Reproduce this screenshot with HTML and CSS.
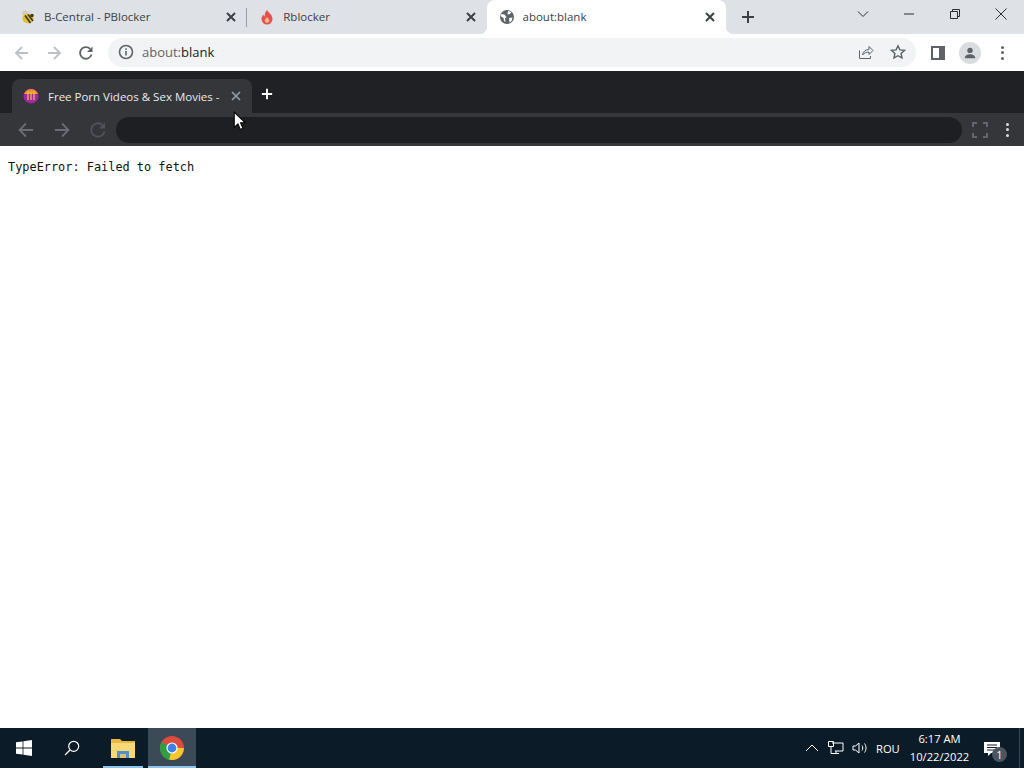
FILE: index.html
```html
<!DOCTYPE html>
<html lang="en">
<head>
    <meta charset="UTF-8">
    <title>about:blank</title>
    <link rel="stylesheet" href="styles.css">
</head>
<body>

<div class="screen">
    <header class="browser">
        <div class="tabstrip">
            <div class="tab">
                <svg class="favicon" viewBox="0 0 16 16">
                    <ellipse cx="5" cy="4" rx="3" ry="2.600" fill="#cfcdbd"/>
                    <ellipse cx="10.500" cy="3" rx="2.200" ry="2" fill="#dedccf"/>
                    <ellipse cx="8" cy="9.500" rx="5.600" ry="4.800" fill="#e0c030"/>
                    <path d="M5 6.500l5.500 7.500M8 5.500l5 6.500" stroke="#3a3822" stroke-width="1.600"/>
                    <circle cx="12" cy="6.500" r="1.700" fill="#3a3822"/>
                </svg>
                <span class="tab-title">B-Central - PBlocker</span>
                <svg class="tab-close" viewBox="0 0 12 12"><path d="M2 2l8 8M10 2l-8 8"/></svg>
            </div>
            <span class="tab-sep"></span>
            <div class="tab">
                <svg class="favicon" viewBox="0 0 16 16">
                    <path d="M8 1c1 2.500 5.500 4.500 5.500 9A5.500 5.500 0 0 1 2.500 10c0-2 1-3.500 2-4.500 0 1 .5 1.800 1.200 2C5.500 5 6.500 2.500 8 1z" fill="#e8504f"/>
                    <path d="M8 8c.6 1.200 2.300 2 2.300 3.500a2.300 2.300 0 0 1-4.600 0C5.700 10 7.400 9.200 8 8z" fill="#f9b98e"/>
                </svg>
                <span class="tab-title">Rblocker</span>
                <svg class="tab-close" viewBox="0 0 12 12"><path d="M2 2l8 8M10 2l-8 8"/></svg>
            </div>
            <div class="tab active">
                <svg class="favicon" viewBox="0 0 16 16">
                    <circle cx="8" cy="8" r="7" fill="#5f6368"/>
                    <path d="M2.500 5l3 .5 2 2.500-1.500 1.500.5 3.500-1.500-1-.5-3-3-2zM9 2l3.500 1-1.500 2-2.500.5zM10 9l3.500-.5-1 3.500-2 1.500z" fill="#fff"/>
                </svg>
                <span class="tab-title">about:blank</span>
                <svg class="tab-close" viewBox="0 0 12 12"><path d="M2 2l8 8M10 2l-8 8"/></svg>
            </div>
            <svg class="new-tab" viewBox="0 0 14 14"><path d="M7 1v12M1 7h12"/></svg>
            <div class="window-btns">
                <span class="win-btn"><svg viewBox="0 0 12 12"><path d="M1 3.500l5 5 5-5"/></svg></span>
                <span class="win-btn"><svg viewBox="0 0 12 12"><path d="M1 6h10"/></svg></span>
                <span class="win-btn"><svg viewBox="0 0 12 12"><path d="M1.500 3.500h7v7h-7zM3.500 3.500v-2h7v7h-2"/></svg></span>
                <span class="win-btn"><svg viewBox="0 0 12 12"><path d="M.5.500l11 11M11.500.500l-11 11"/></svg></span>
            </div>
        </div>

        <div class="toolbar">
            <svg class="nav-icon off" viewBox="0 0 16 16"><path d="M14 8H2.500M8 2L2 8l6 6"/></svg>
            <svg class="nav-icon off" viewBox="0 0 16 16"><path d="M2 8h11.500M8 2l6 6-6 6"/></svg>
            <svg class="nav-icon on" viewBox="0 0 16 16"><path d="M13.500 9.500A5.800 5.800 0 1 1 12 3.800"/><path class="fill" d="M14.500 1.500v5.500H9z"/></svg>
            <div class="omnibox">
                <svg class="info-icon" viewBox="0 0 16 16"><circle cx="8" cy="8" r="6.500"/><path d="M8 7v4.500M8 4.300v1.500"/></svg>
                <span class="url"><span class="scheme">about:</span>blank</span>
                <svg class="omni-icon share" viewBox="0 0 16 16"><path d="M1.500 6.500v8h11v-2.500"/><path d="M4.500 11c.5-3.500 3-5.500 6.500-5.500V2.500l4 4-4 4V8c-2.500 0-5 1-6.500 3z"/></svg>
                <svg class="omni-icon" viewBox="0 0 16 16"><path d="M8 1.800l1.900 4.100 4.500.5-3.300 3 .9 4.500L8 11.700l-4 2.200.9-4.500-3.300-3 4.500-.5z"/></svg>
            </div>
            <svg class="panel-icon" viewBox="0 0 14 14"><path fill="#5f6368" d="M0 0h14v14H0z"/><path fill="#fff" d="M2 2h6v10H2z"/></svg>
            <span class="avatar">
                <svg viewBox="0 0 16 16"><circle cx="8" cy="5" r="3.100"/><path d="M2 14c0-3.500 3-4.700 6-4.700s6 1.200 6 4.700z"/></svg>
            </span>
            <span class="dots"><i></i><i></i><i></i></span>
        </div>
    </header>

    <section class="inner-browser">
        <div class="inner-tabstrip">
            <div class="inner-tab">
                <svg class="favicon" viewBox="0 0 16 16">
                    <circle cx="8" cy="8" r="7.500" fill="#a02a9a"/>
                    <path d="M1 6a7.500 7.500 0 0 1 14 0z" fill="#e59a2c"/>
                    <path d="M5 4v8M8 4v8M11 4v8" stroke="#f3c25a" stroke-width="1.200"/>
                </svg>
                <span class="inner-title">Free Porn Videos &amp; Sex Movies -</span>
                <svg class="inner-close" viewBox="0 0 12 12"><path d="M2 2l8 8M10 2l-8 8"/></svg>
            </div>
            <svg class="inner-new" viewBox="0 0 14 14"><path d="M7 1v12M1 7h12"/></svg>
        </div>
        <div class="inner-toolbar">
            <svg class="inner-nav" viewBox="0 0 18 18"><path d="M16 9H2.500M9 2.500L2.500 9 9 15.500"/></svg>
            <svg class="inner-nav" viewBox="0 0 18 18"><path d="M2 9h13.500M9 2.500L15.500 9 9 15.500"/></svg>
            <svg class="inner-nav dim" viewBox="0 0 18 18"><path d="M15.500 10.500A6.700 6.700 0 1 1 13.500 4"/><path class="fill" d="M16 1.500v6h-6z"/></svg>
            <div class="inner-omnibox"></div>
            <svg class="fullscreen-icon" viewBox="0 0 16 16"><path d="M1 5V1h4M11 1h4v4M15 11v4h-4M5 15H1v-4"/></svg>
            <span class="dots light"><i></i><i></i><i></i></span>
        </div>
    </section>

    <main class="content">
        <pre class="error-text">TypeError: Failed to fetch</pre>
    </main>

    <footer class="taskbar">
        <span class="task-btn">
            <svg class="start-icon" viewBox="0 0 16 16"><path d="M0 2.300l6.600-.9v6.200H0zM7.400 1.300L16 0v7.600H7.400zM0 8.400h6.600v6.200L0 13.700zM7.400 8.400H16V16l-8.600-1.300z"/></svg>
        </span>
        <span class="task-btn">
            <svg class="search-icon" viewBox="0 0 16 16"><circle cx="9.700" cy="6.300" r="5"/><path d="M6 10L1 15"/></svg>
        </span>
        <span class="task-btn app running files">
            <svg viewBox="0 0 24 22">
                <path d="M0 2h9l2 2h13v17H0z" fill="#e8b93e"/>
                <path d="M0 6h24v15H0z" fill="#f8d775"/>
                <path d="M6 14h12v7h-3v-4H9v4H6z" fill="#4b93c9"/>
                <path d="M9 17h6v4H9z" fill="#d6c27a"/>
            </svg>
        </span>
        <span class="task-btn app running current">
            <svg viewBox="0 0 24 24">
                <circle cx="12" cy="12" r="12" fill="#dd4b3e"/>
                <path d="M12 12L1.600 6 A12 12 0 0 0 12 24z" fill="#2f9e44"/>
                <path d="M12 12h11.900A12 12 0 0 1 9 23.600z" fill="#f6c62e"/>
                <path d="M12 12L1.600 18 A12 12 0 0 0 9 23.600z" fill="#2f9e44"/>
                <circle cx="12" cy="12" r="5.600" fill="#fff"/>
                <circle cx="12" cy="12" r="4.400" fill="#3f80e6"/>
            </svg>
        </span>

        <div class="tray">
            <svg class="tray-icon" viewBox="0 0 16 16"><path d="M2 11l6-6 6 6"/></svg>
            <svg class="tray-icon" viewBox="0 0 16 16"><path d="M4 3h11v8H7M.5 1.500h5v5h-5zM3 6.500v7M3 13.500h8M8 11v2.500"/></svg>
            <svg class="tray-icon" viewBox="0 0 16 16"><path d="M1 6v4h2.500L7 13V3L3.500 6zM10 5.500c1 1.500 1 3.500 0 5M12.500 3.500c2 2.500 2 6.500 0 9"/></svg>
            <span class="lang">ROU</span>
            <div class="clock">
                <span>6:17 AM</span>
                <span>10/22/2022</span>
            </div>
            <span class="notify">
                <svg viewBox="0 0 16 16"><path d="M0 1h16v11H7l-3 3v-3H0z" fill="#fff"/><path d="M3 4h10M3 6.500h10M3 9h7" stroke="#0c1b28"/></svg>
                <span class="notify-count">1</span>
            </span>
        </div>
    </footer>

    <svg class="cursor" viewBox="0 0 12 19"><path d="M1 1v14.500l3.500-3.300 2.300 5.300 2.500-1.100-2.300-5.200H11.500z" fill="#fff" stroke="#000"/></svg>
</div>

</body>
</html>
```

FILE: styles.css
```css
:root {
    --strip: #dee1e6;
    --dark: #202124;
    --dark-tab: #35363a;
    --icon: #5f6368;
    --text: #3c4043;
    --task: #0c1b28;
}
* { box-sizing: border-box; }
html, body { margin: 0; height: 100%; overflow: hidden; }
body { font-family: "Open Sans", "Noto Sans", sans-serif; background: #fff; }
.screen {
    position: relative;
    width: 1024px;
    height: 768px;
    display: flex;
    flex-direction: column;
}

/* outer chrome window */
.tabstrip {
    height: 34px;
    background: var(--strip);
    display: flex;
    align-items: flex-start;
    padding-left: 8px;
}
.tab {
    position: relative;
    width: 239.25px;
    height: 34px;
    display: flex;
    align-items: center;
    padding: 0 10px 0 12px;
    flex-shrink: 0;
}
.tab-sep {
    width: 1px;
    height: 19px;
    margin: 8px 0 0 -1px;
    background: #9aa0a6;
    flex-shrink: 0;
}
.tab.active { background: #fff; border-radius: 8px 8px 0 0; }
.tab.active::before, .tab.active::after {
    content: "";
    position: absolute;
    bottom: 0;
    width: 8px;
    height: 8px;
}
.tab.active::before { left: -8px; background: radial-gradient(circle at 0 0, transparent 8px, #fff 8.5px); }
.tab.active::after { right: -8px; background: radial-gradient(circle at 100% 0, transparent 8px, #fff 8.5px); }
.favicon { width: 16px; height: 16px; flex-shrink: 0; }
.tab-title {
    flex: 1;
    margin: 0 0 2px 8px;
    font-size: 11.5px;
    color: var(--text);
    white-space: nowrap;
    overflow: hidden;
}
.tab-close { width: 12px; height: 12px; fill: none; stroke: #3c4043; stroke-width: 2; }
.new-tab {
    width: 14px;
    height: 14px;
    margin: 10px 0 0 15px;
    fill: none;
    stroke: #3c4043;
    stroke-width: 2;
}
.window-btns { margin-left: auto; display: flex; }
.win-btn {
    width: 46px;
    height: 28px;
    display: flex;
    align-items: center;
    justify-content: center;
}
.win-btn svg { width: 12px; height: 12px; fill: none; stroke: #2b2d30; stroke-width: 1; }

.toolbar {
    height: 37px;
    background: #fff;
    display: flex;
    align-items: center;
    padding-left: 14px;
}
.nav-icon { width: 16px; height: 16px; margin-right: 16px; fill: none; stroke-width: 1.8; }
.nav-icon.off { stroke: #bdc1c6; }
.nav-icon.on { stroke: var(--icon); }
.nav-icon .fill { fill: var(--icon); stroke: none; }
.omnibox {
    width: 808px;
    height: 29px;
    margin: -1px 15px 0 -2px;
    border-radius: 15px;
    background: #f1f3f4;
    display: flex;
    align-items: center;
    padding: 0 10px;
}
.info-icon { width: 16px; height: 16px; fill: none; stroke: var(--icon); stroke-width: 1.6; }
.url { margin-left: 8px; font-size: 13px; color: #202124; flex: 1; }
.scheme { color: #5f6368; }
.omni-icon { width: 16px; height: 16px; fill: none; stroke: var(--icon); stroke-width: 1.4; margin-left: 16px; }
.omni-icon.share { stroke-width: 1; }
.panel-icon { width: 14px; height: 14px; flex-shrink: 0; }
.avatar {
    width: 22px;
    height: 22px;
    margin-left: 14px;
    border-radius: 50%;
    background: #dadce0;
    display: flex;
    align-items: center;
    justify-content: center;
    flex-shrink: 0;
}
.avatar svg { width: 14px; height: 14px; fill: #5f6368; }
.dots {
    width: 4px;
    margin-left: 20px;
    display: flex;
    flex-direction: column;
    gap: 2.500px;
    flex-shrink: 0;
}
.dots i { width: 3px; height: 3px; border-radius: 50%; background: var(--icon); }
.dots.light { margin-left: 18px; }
.dots.light i { background: #dadce0; }

/* the dark window shown inside the page */
.inner-tabstrip {
    height: 42px;
    background: var(--dark);
    display: flex;
    align-items: flex-start;
    padding: 8px 0 0 12px;
}
.inner-tab {
    width: 240px;
    height: 34px;
    background: var(--dark-tab);
    border-radius: 8px 8px 0 0;
    display: flex;
    align-items: center;
    padding: 0 10px 0 11px;
}
.inner-title {
    flex: 1;
    margin-left: 9px;
    font-size: 11.5px;
    color: #e8eaed;
    white-space: nowrap;
    overflow: hidden;
}
.inner-close { width: 12px; height: 12px; fill: none; stroke: #9aa0a6; stroke-width: 1.6; }
.inner-new {
    width: 12px;
    height: 12px;
    margin: 9px 0 0 9px;
    fill: none;
    stroke: #fff;
    stroke-width: 2.200;
}
.inner-toolbar {
    height: 33px;
    background: var(--dark-tab);
    display: flex;
    align-items: center;
    padding-left: 17px;
}
.inner-nav { width: 18px; height: 18px; margin-right: 18px; fill: none; stroke: #6a6e73; stroke-width: 1.8; }
.inner-nav.dim { stroke: #505357; }
.inner-nav .fill { fill: #505357; stroke: none; }
.inner-omnibox {
    width: 846px;
    height: 26px;
    margin-left: -9px;
    border-radius: 13px;
    background: #1e1f22;
}
.fullscreen-icon { width: 16px; height: 16px; margin-left: 10px; fill: none; stroke: #63666a; stroke-width: 2; }

.content { flex: 1; background: #fff; padding: 14px 8px 0; }
.error-text {
    margin: 0;
    font-family: "DejaVu Sans Mono", "Liberation Mono", monospace;
    font-size: 11.9px;
    line-height: 14px;
    color: #111;
}

/* windows taskbar */
.taskbar {
    height: 40px;
    background: var(--task);
    display: flex;
    align-items: stretch;
}
.task-btn {
    width: 48px;
    display: flex;
    align-items: center;
    justify-content: center;
    position: relative;
}
.task-btn.files { margin-left: 4px; padding-right: 2px; }
.task-btn.app svg { width: 24px; height: 24px; }
.task-btn.current { background: #3b4a56; }
.task-btn.running::after {
    content: "";
    position: absolute;
    left: 3px;
    right: 5px;
    bottom: 0;
    height: 2px;
    background: #8cc4ee;
}
.task-btn.current::after { left: 0; right: 0; }
.start-icon { width: 16px; height: 16px; fill: #fff; }
.search-icon { width: 16px; height: 16px; fill: none; stroke: #fff; stroke-width: 1.200; }
.tray {
    margin-left: auto;
    display: flex;
    align-items: center;
    color: #fff;
    font-size: 11.2px;
}
.tray-icon { width: 16px; height: 16px; margin-right: 8px; fill: none; stroke: #fff; stroke-width: 1; }
.lang { width: 31px; }
.clock {
    width: 65px;
    display: flex;
    flex-direction: column;
    align-items: center;
    line-height: 18px;
}
.clock span { white-space: nowrap; }
.notify {
    position: relative;
    width: 48px;
    height: 100%;
    padding: 13px 0 0 12px;
    border-right: 1px solid #3b4a56;
    margin-right: 4px;
}
.notify svg { width: 16px; height: 16px; display: block; }
.notify-count {
    position: absolute;
    left: 20px;
    top: 19px;
    width: 15px;
    height: 15px;
    border-radius: 50%;
    background: #4c5660;
    font-size: 11px;
    line-height: 15px;
    text-align: center;
}

.cursor { position: absolute; left: 233px; top: 111px; width: 13px; height: 20px; }
```
